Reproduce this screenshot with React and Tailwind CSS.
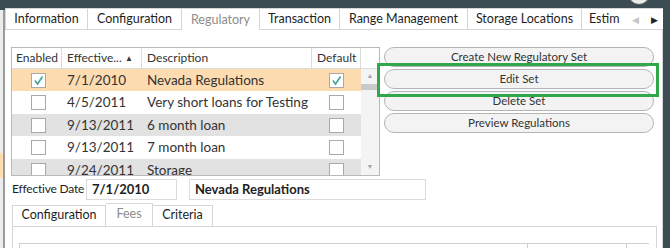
import React from "react";

const font = { fontFamily: 'Lato, "Open Sans", sans-serif' };

const Check = ({ checked }) => (
  <div className="w-[15px] h-[15px] border border-[#a9a9a9] bg-white flex items-center justify-center">
    {checked && (
      <svg width="11" height="11" viewBox="0 0 11 11">
        <path d="M2 5.5 L4.5 9 L9.5 1.5" fill="none" stroke="#3ea69c" strokeWidth="1.6" />
      </svg>
    )}
  </div>
);

const rows = [
  { en: true, date: "7/1/2010", desc: "Nevada Regulations", def: true, bg: "bg-[#fddcb1]" },
  { en: false, date: "4/5/2011", desc: "Very short loans for Testing", def: false, bg: "bg-white" },
  { en: false, date: "9/13/2011", desc: "6 month loan", def: false, bg: "bg-[#e2e2e2]" },
  { en: false, date: "9/13/2011", desc: "7 month loan", def: false, bg: "bg-white" },
  { en: false, date: "9/24/2011", desc: "Storage", def: false, bg: "bg-[#e2e2e2]" },
];

const tabs = [
  { label: "Information", w: "w-[83px]" },
  { label: "Configuration", w: "w-[94px]" },
  { label: "Regulatory", w: "w-[78px]", active: true },
  { label: "Transaction", w: "w-[80px]" },
  { label: "Range Management", w: "w-[128px]" },
  { label: "Storage Locations", w: "w-[114px]" },
];

const buttons = ["Create New Regulatory Set", "Edit Set", "Delete Set", "Preview Regulations"];

export default function App() {
  return (
    <div className="w-[670px] h-[248px] bg-[#3b4d53] overflow-hidden relative flex whitespace-nowrap" style={font}>
      {/* left strip */}
      <div className="w-[5px] mt-[10px] flex flex-col">
        <div className="flex-1 flex">
          <div className="w-[3px] flex flex-col bg-[#ececec]">
            <div className="h-[143px]" />
            <div className="h-[25px] bg-[#fddcb1]" />
          </div>
          <div className="w-[2px] bg-[#9a9a9a]" />
        </div>
      </div>

      <div className="w-[658px] flex flex-col pt-[8px]">
        {/* top tabs */}
        <div className="h-[24px] flex bg-white border-b border-[#d6d6d6] text-[12.5px] text-[#1e1e1e]">
          {tabs.map((t) => (
            <div
              key={t.label}
              className={`${t.w} flex items-center justify-center pt-[1px] border-r border-t border-[#d6d6d6] ${
                t.active ? "text-[#8c8c8c] -mb-px bg-white" : ""
              } ${t.label === "Information" ? "border-l" : ""}`}
            >
              {t.label}
            </div>
          ))}
          <div className="flex-1 flex items-center border-t border-[#d6d6d6] pl-[7px] pt-[1px]">
            <div className="w-[31px] overflow-hidden">Estim</div>
            <span className="text-[9px] text-[#c4c4c4] ml-[12px]">◀</span>
            <span className="text-[9px] text-[#222] ml-[12px]">▶</span>
          </div>
        </div>

        {/* panel */}
        <div className="flex-1 bg-white border-r border-[#d6d6d6] pl-[6px] pt-[17px]">
          <div className="flex">
            {/* grid */}
            <div className="w-[369px] h-[129px] border border-[#b9b9b9] overflow-hidden flex flex-col">
              <div className="h-[21px] flex text-[12px] text-[#333] border-b border-[#dcdcdc] shrink-0">
                <div className="w-[50px] pl-[4px] flex items-center border-r border-[#dcdcdc]">Enabled</div>
                <div className="w-[80px] pl-[5px] pr-[8px] flex items-center justify-between border-r border-[#dcdcdc]">
                  <span>Effective...</span>
                  <span className="text-[8px] text-[#333]">▲</span>
                </div>
                <div className="w-[170px] pl-[5px] flex items-center border-r border-[#dcdcdc]">Description</div>
                <div className="w-[49px] pl-[5px] flex items-center border-r border-[#dcdcdc]">Default</div>
                <div className="flex-1" />
              </div>
              <div className="flex flex-1 overflow-hidden">
                <div className="w-[349px] flex flex-col">
                  {rows.map((r, i) => (
                    <div key={i} className={`h-[22.5px] shrink-0 flex items-center text-[13.5px] text-[#333] ${r.bg}`}>
                      <div className="w-[50px] flex justify-center pl-[2px]">
                        <Check checked={r.en} />
                      </div>
                      <div className="w-[80px] pl-[5px]">{r.date}</div>
                      <div className="w-[170px] pl-[5px]">{r.desc}</div>
                      <div className="w-[49px] flex justify-center">
                        <Check checked={r.def} />
                      </div>
                    </div>
                  ))}
                </div>
                <div className="flex-1 bg-[#f4f4f4] flex flex-col items-center">
                  <span className="text-[7px] text-[#a8a8a8] mt-[3px] leading-none">▲</span>
                  <div className="w-full h-[6px] bg-[#c9c9c9] mt-[5px]" />
                  <div className="flex-1" />
                  <span className="text-[7px] text-[#a8a8a8] mb-[5px] leading-none">▼</span>
                </div>
              </div>
            </div>

            {/* buttons */}
            <div className="ml-[4px] w-[270px] flex flex-col gap-[1.5px] text-[11.5px] text-[#333]">
              {buttons.map((b) => (
                <div
                  key={b}
                  className="h-[20.5px] rounded-full border border-[#b4b4b4] bg-[#f3f3f3] flex items-center justify-center"
                >
                  {b}
                </div>
              ))}
            </div>
          </div>

          {/* effective date */}
          <div className="flex items-center mt-[3px] h-[21px] pl-[1px] text-[12px] text-[#1e1e1e]">
            <span className="w-[74px] tracking-[-0.2px]">Effective Date</span>
            <div className="w-[91px] h-[21px] border border-[#dcdcdc] flex items-center pl-[5px] font-bold text-[13px]">7/1/2010</div>
            <div className="w-[237px] h-[21px] border border-[#dcdcdc] flex items-center pl-[5px] ml-[12px] font-bold text-[13px]">
              Nevada Regulations
            </div>
          </div>

          {/* sub tabs */}
          <div className="mt-[3px] ml-[1px] h-[23px] flex items-end text-[12.5px] text-[#1e1e1e]">
            <div className="w-[94px] h-[21px] border border-b-0 border-[#d6d6d6] flex items-center justify-center">Configuration</div>
            <div className="w-[47px] h-[23px] border-t border-r border-[#d6d6d6] flex items-center justify-center text-[#8c8c8c]">Fees</div>
            <div className="w-[60px] h-[21px] border-t border-r border-[#d6d6d6] flex items-center justify-center">Criteria</div>
          </div>
          <div className="ml-[1px] w-[645px] h-[30px] border border-[#d6d6d6] pt-[16px] pl-[6px]">
            <div className="w-[630px] h-[10px] border-t border-l border-[#cfcfcf] flex">
              <div className="w-[508px] border-r border-[#cfcfcf]" />
              <div className="w-[99px] border-r border-[#cfcfcf]" />
            </div>
          </div>
        </div>
      </div>

      {/* green highlight */}
      <div className="absolute left-[377px] top-[63px] w-[282px] h-[34px] border-[3px] border-[#2fa84c]" />
      {/* top-right round control */}
      <div className="absolute left-[628px] top-[-18px] w-[22px] h-[23px] rounded-full bg-[#e9e9e9] border border-[#555]" />
    </div>
  );
}
